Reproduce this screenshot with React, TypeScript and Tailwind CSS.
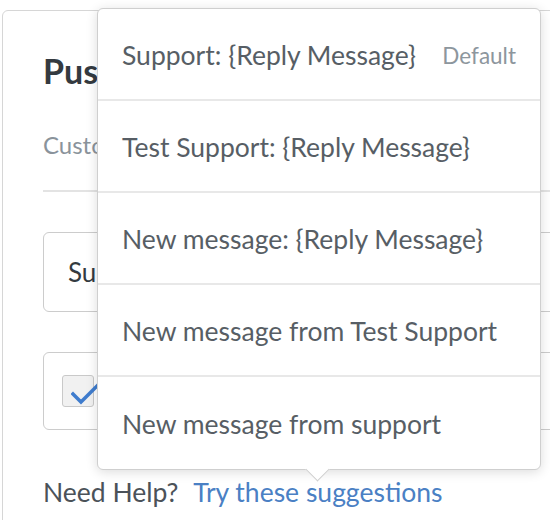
import React from "react";

const suggestions = [
  { label: "Support: {Reply Message}", isDefault: true },
  { label: "Test Support: {Reply Message}" },
  { label: "New message: {Reply Message}" },
  { label: "New message from Test Support" },
  { label: "New message from support" },
];

function SuggestionMenu() {
  return (
    <div className="absolute left-[97px] top-[8px] w-[444px] rounded-[6px] border border-[#cfcfcf] bg-white shadow-[0_2px_12px_rgba(0,0,0,0.14)]">
      {suggestions.map((s, i) => (
        <div
          key={s.label}
          className={`flex h-[92px] items-center justify-between pl-[24px] pr-[24px] pt-[4px] ${
            i < suggestions.length - 1 ? "border-b-2 border-[#e8e8e8]" : ""
          }`}
        >
          <span className="text-[26.5px] text-[#575e65]">{s.label}</span>
          {s.isDefault && <span className="text-[22.5px] text-[#8d969d]">Default</span>}
        </div>
      ))}
      {/* pointer */}
      <div className="absolute bottom-[-9px] left-[211px] h-[17px] w-[17px] rotate-45 border-b border-r border-[#cfcfcf] bg-white" />
    </div>
  );
}

export default function App() {
  return (
    <div
      className="relative h-[520px] w-[550px] overflow-hidden bg-white"
      style={{ fontFamily: "Lato, 'Open Sans', sans-serif" }}
    >
      <div className="ml-[2px] mt-[10px] h-[560px] w-[620px] rounded-[6px] border border-[#d6d6d6] pl-[40px] pr-[40px] pt-[38px]">
        <h2 className="text-[34px] font-bold leading-[44px] text-[#343a40]">Push Notification Title</h2>
        <p className="mt-[36px] whitespace-nowrap text-[24px] leading-[32px] text-[#8a939b]">
          Customize the push notification title text
        </p>
        <div className="mt-[29px] border-t-2 border-[#e3e3e3]" />
        <div className="mt-[40px] flex h-[80px] items-center rounded-[6px] border border-[#cccccc] pl-[24px] text-[26px] text-[#343a40]">
          Support: {"{Reply Message}"}
        </div>
        <div className="mt-[40px] flex h-[78px] items-center gap-3 rounded-[6px] border border-[#cccccc] pl-[18px]">
          <div className="relative h-[32px] w-[32px] rounded-[3px] border border-[#c9c9c9] bg-[#f1f1f1]">
            <svg className="absolute left-[8px] top-[2px]" width="40" height="30" viewBox="0 0 40 30">
              <path d="M2 16 L10 24 L30 4" fill="none" stroke="#3f7ccd" strokeWidth="3.5" strokeLinecap="square" />
            </svg>
          </div>
          <span className="text-[24px] text-[#343a40]">Use default</span>
        </div>
        <p className="mt-[46px] text-[26.5px] leading-[32px] text-[#4b5259]">
          Need Help? <span className="ml-[8px] text-[#4a80c4]">Try these suggestions</span>
        </p>
      </div>
      <SuggestionMenu />
    </div>
  );
}
